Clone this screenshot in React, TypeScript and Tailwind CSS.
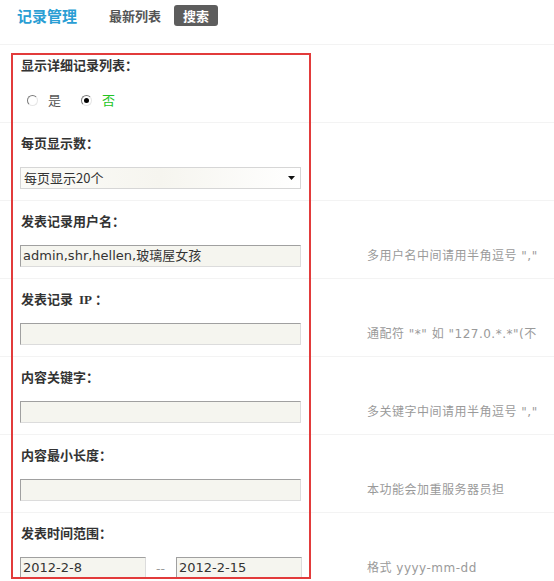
import type { ReactNode } from "react";

const cjk = "font-['Noto_Sans_CJK_SC','DejaVu_Sans',sans-serif]";
const mono = "font-['DejaVu_Sans','Noto_Sans_CJK_SC',sans-serif]";

function Row({
  label,
  note,
  children,
}: {
  label: ReactNode;
  note?: string;
  children: ReactNode;
}) {
  return (
    <div className="h-[78px] border-b border-[#f3f3f3] pt-[12px]">
      <div className="h-[16px] pl-[21px] text-[13px] leading-[16px] font-bold text-[#333]">
        {label}
      </div>
      <div className="mt-[16px] flex h-[22px] items-center">
        <div className="flex w-[367px] items-center pl-[20px]">{children}</div>
        {note && (
          <div className={`whitespace-nowrap text-[12px] tracking-[0.5px] text-[#9a9a9a] ${mono}`}>
            {note}
          </div>
        )}
      </div>
    </div>
  );
}

function TextBox({ value = "", w = "w-[281px]" }: { value?: string; w?: string }) {
  return (
    <div
      className={`${w} h-[22px] border border-t-[#a0a0a0] border-l-[#a0a0a0] border-b-[#dcdcdc] border-r-[#dcdcdc] bg-[#f5f5ef] pl-[2px] text-[13px] leading-[20px] text-[#333] ${mono}`}
    >
      {value}
    </div>
  );
}

function Radio({ checked }: { checked?: boolean }) {
  return (
    <span className="flex h-[11px] w-[11px] items-center justify-center rounded-full border border-t-[#7a7a7a] border-l-[#7a7a7a] border-b-[#e6e6e6] border-r-[#e6e6e6] bg-white">
      {checked && <span className="h-[5px] w-[5px] rounded-full bg-black" />}
    </span>
  );
}

export default function App() {
  return (
    <div className={`relative h-[581px] w-[554px] overflow-hidden bg-white ${cjk}`}>
      {/* 顶部 tab */}
      <div className="flex h-[45px] items-start border-b border-[#f3f3f3] pt-[5px]">
        <span className="ml-[17px] mt-[1px] text-[15px] leading-[20px] font-bold text-[#2a9ed4]">
          记录管理
        </span>
        <span className="ml-[32px] mt-[1px] text-[13px] leading-[20px] font-bold text-[#555]">
          最新列表
        </span>
        <span className="ml-[13px] h-[21px] rounded-[3px] bg-[#5d5d5d] px-[9px] text-[13px] leading-[21px] font-bold text-white">
          搜索
        </span>
      </div>

      <Row label="显示详细记录列表：">
        <div className="flex items-center pl-[7px] text-[13px]">
          <Radio />
          <span className="ml-[10px] text-[#555]">是</span>
          <span className="ml-[20px]">
            <Radio checked />
          </span>
          <span className="ml-[10px] text-[#22c422]">否</span>
        </div>
      </Row>

      <Row label="每页显示数：">
        <div className="flex h-[22px] w-[281px] items-center justify-between border border-[#d6d6d6] bg-gradient-to-r from-[#fbfbf8] via-[#f6f5ef] to-white pl-[3px] pr-[5px] text-[13px] text-[#333]">
          <span>每页显示20个</span>
          <svg width="7" height="4" viewBox="0 0 7 4">
            <path d="M0 0h7L3.5 4z" fill="#111" />
          </svg>
        </div>
      </Row>

      <Row label="发表记录用户名：" note={'多用户名中间请用半角逗号 ","'}>
        <TextBox value="admin,shr,hellen,玻璃屋女孩" />
      </Row>

      <Row
        label={
          <span>
            发表记录 <span className="ml-[3px] font-['Liberation_Serif',serif]">IP</span> ：
          </span>
        }
        note={'通配符 "*" 如 "127.0.*.*"(不'}
      >
        <TextBox />
      </Row>

      <Row label="内容关键字：" note={'多关键字中间请用半角逗号 ","'}>
        <TextBox />
      </Row>

      <Row label="内容最小长度：" note="本功能会加重服务器员担">
        <TextBox />
      </Row>

      <Row label="发表时间范围：" note="格式 yyyy-mm-dd">
        <div className="flex items-center">
          <TextBox value="2012-2-8" w="w-[126px]" />
          <span className="ml-[10px] mr-[11px] text-[13px] text-[#999]">--</span>
          <TextBox value="2012-2-15" w="w-[126px]" />
        </div>
      </Row>

      {/* 红色标注框 */}
      <div className="pointer-events-none absolute left-[11px] top-[53px] h-[526px] w-[300px] border-2 border-[#e23b3b]" />
    </div>
  );
}
